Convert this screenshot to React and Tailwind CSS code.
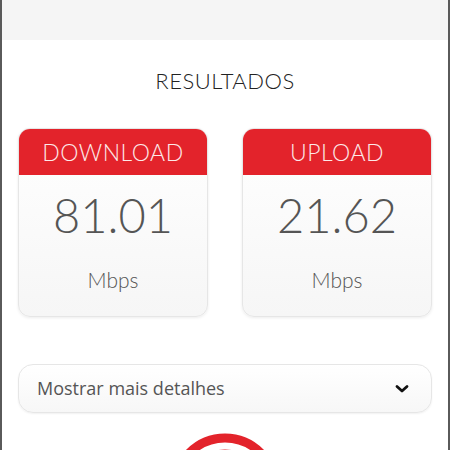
import React from 'react';

const ResultCard = ({ label, value }) => (
  <div className="flex h-[189px] w-[190px] flex-col overflow-hidden rounded-[12px] border border-[#e6e6e6] bg-gradient-to-b from-white to-[#f6f6f6] shadow-[0_1px_3px_rgba(0,0,0,0.08)]">
    <div className="flex h-[46px] items-center justify-center bg-[#e3232b] text-[23px] font-light tracking-[0.5px] text-[#fde9e9]">
      {label}
    </div>
    <div className="flex flex-1 flex-col items-center">
      <div className="mt-[10px] text-[47px] font-light leading-[60px] text-[#555]">{value}</div>
      <div className="mt-[19px] text-[21px] font-light text-[#555]">Mbps</div>
    </div>
  </div>
);

const App = () => {
  return (
    <div className="h-[450px] w-[450px] overflow-hidden border-x-2 border-[#5a5a5a] bg-white font-['Lato','Liberation_Sans',sans-serif]">
      <div className="h-[40px] overflow-hidden bg-[#f5f5f5]">
        <div className="mt-[-23px] pl-[18px] text-[20px] leading-[28px] text-[#555]">Resultado do seu teste de velocidade</div>
      </div>
      <h1 className="mt-[24px] text-center text-[22px] font-light tracking-[0.5px] text-[#222]">RESULTADOS</h1>
      <div className="mt-[31px] flex justify-between px-[16px]">
        <ResultCard label="DOWNLOAD" value="81.01" />
        <ResultCard label="UPLOAD" value="21.62" />
      </div>
      <div className="mx-[16px] mt-[47px] flex h-[49px] items-center justify-between rounded-[15px] border border-[#e6e6e6] bg-gradient-to-b from-white to-[#f7f7f7] pl-[18px] pr-[22px] shadow-[0_1px_2px_rgba(0,0,0,0.06)]">
        <span className="font-['Open_Sans',sans-serif] text-[18px] text-[#555]">Mostrar mais detalhes</span>
        <svg width="14" height="10" viewBox="0 0 14 10" fill="none">
          <path d="M2 2.5 L7 7 L12 2.5" stroke="#111" strokeWidth="2.8" strokeLinecap="round" strokeLinejoin="round" />
        </svg>
      </div>
      <div className="mt-[17px] flex justify-center">
        <svg width="110" height="60" viewBox="0 0 110 60">
          <circle cx="55" cy="58" r="50" fill="none" stroke="#e3232b" strokeWidth="9" />
          <circle cx="55" cy="58" r="36" fill="none" stroke="#e3232b" strokeWidth="5" />
        </svg>
      </div>
    </div>
  );
};

export default App;
